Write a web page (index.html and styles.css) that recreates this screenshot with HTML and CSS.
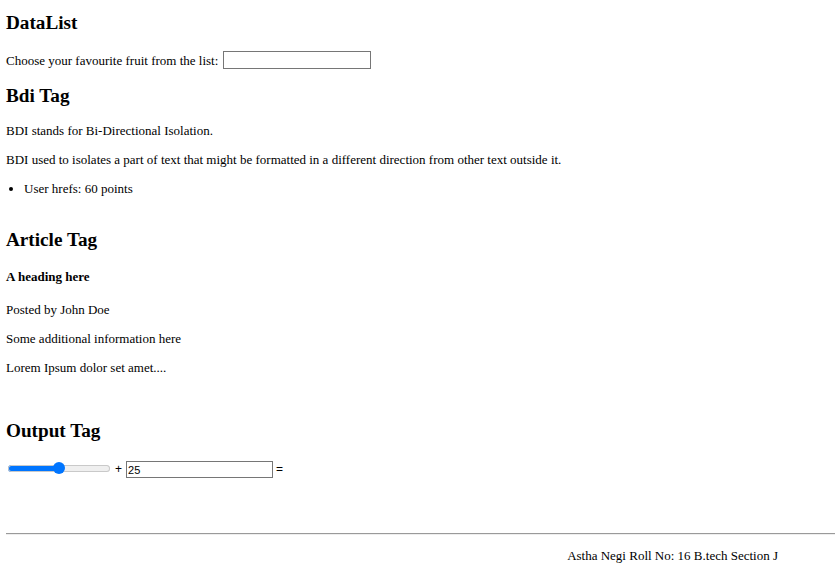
FILE: index.html
```html
<!DOCTYPE html>
<html lang="en">
<head>
<meta charset="utf-8">
<title>HTML Tags</title>
<link rel="stylesheet" href="styles.css">
</head>
<body>
<h2 class="title title-first">DataList</h2>
<div class="choose-row">
  <label class="text" for="fruit">Choose your favourite fruit from the list:</label>
  <input class="text-input" id="fruit" list="fruits" type="text">
  <datalist id="fruits">
    <option value="Apple"></option>
    <option value="Banana"></option>
    <option value="Mango"></option>
  </datalist>
</div>

<h2 class="title title-bdi">Bdi Tag</h2>
<p class="para para-first">BDI stands for Bi-Directional Isolation.</p>
<p class="para">BDI used to isolates a part of text that might be formatted in a different direction from other text outside it.</p>
<ul class="list">
  <li><bdi>User hrefs</bdi>: 60 points</li>
</ul>

<h2 class="title title-article">Article Tag</h2>
<article class="article">
  <h4 class="sub">A heading here</h4>
  <p class="para para-posted">Posted by John Doe</p>
  <p class="para">Some additional information here</p>
  <p class="para">Lorem Ipsum dolor set amet....</p>
</article>

<h2 class="title title-output">Output Tag</h2>
<form class="output-row">
  <input class="range" type="range" id="a" value="50">
  <span class="op op-plus">+</span>
  <input class="num-input" type="number" id="b" value="25">
  <span class="op">=</span>
  <output class="op" name="x" for="a b"></output>
</form>

<hr class="rule">
<div class="footer">Astha Negi Roll No: 16 B.tech Section J</div>
</body>
</html>
```

FILE: styles.css
```css
html, body {
  background: #ffffff;
}

body {
  margin: 0;
  padding: 11px 0 0 6px;
  font-family: "Liberation Serif", "Times New Roman", serif;
  font-size: 13px;
  line-height: 15px;
  color: #000000;
}

.title {
  font-size: 19.2px;
  line-height: 23px;
  font-weight: bold;
  margin: 0;
}

.title-first { margin-top: 0; }
.title-bdi { margin-top: 15px; }
.title-article { margin-top: 32px; }
.title-output { margin-top: 44px; }

.choose-row {
  display: flex;
  align-items: center;
  height: 18px;
  margin-top: 17px;
}

.text {
  margin-right: 5px;
}

.text-input {
  box-sizing: border-box;
  width: 148px;
  height: 18px;
  margin: 0;
  padding: 1px 2px;
  border: 1px solid #767676;
  font-family: "Liberation Sans", Arial, sans-serif;
  font-size: 11px;
  background: #ffffff;
}

.para {
  margin: 14px 0 0;
}

.para-first { margin-top: 16px; }
.para-posted { margin-top: 18px; }

.list {
  margin: 14px 0 0;
  padding-left: 18px;
}

.article {
  display: block;
}

.sub {
  font-size: 13px;
  line-height: 15px;
  font-weight: bold;
  margin: 18px 0 0;
}

.output-row {
  display: flex;
  align-items: center;
  height: 17px;
  margin: 19px 0 0;
}

.range {
  -webkit-appearance: none;
  appearance: none;
  width: 102px;
  height: 12px;
  margin: 0 5px 3px 2px;
  padding: 0;
  background: transparent;
}

.range::-webkit-slider-runnable-track {
  height: 7px;
  border-radius: 4px;
  background: linear-gradient(to right, #0075ff 0, #0075ff 50%, #efefef 50%, #efefef 100%);
  box-shadow: inset 0 0 0 1px #c9c9c9;
}

.range::-webkit-slider-thumb {
  -webkit-appearance: none;
  appearance: none;
  width: 12px;
  height: 12px;
  margin-top: -2.5px;
  border-radius: 50%;
  background: #0075ff;
  border: none;
}

.op {
  font-family: "Liberation Sans", Arial, sans-serif;
  font-size: 12px;
}

.op-plus {
  margin-right: 4px;
}

.num-input {
  box-sizing: border-box;
  width: 147px;
  height: 17px;
  margin: 0 3px 0 0;
  padding: 0 1px;
  border: 1px solid #767676;
  font-family: "Liberation Sans", Arial, sans-serif;
  font-size: 11px;
  background: #ffffff;
}

.rule {
  margin: 55px 0 0;
  height: 0;
  border: none;
  border-top: 1px solid #9a9a9a;
  border-bottom: 1px solid #eeeeee;
}

.footer {
  display: flex;
  justify-content: flex-end;
  padding-right: 57px;
  margin-top: 13px;
}
```
